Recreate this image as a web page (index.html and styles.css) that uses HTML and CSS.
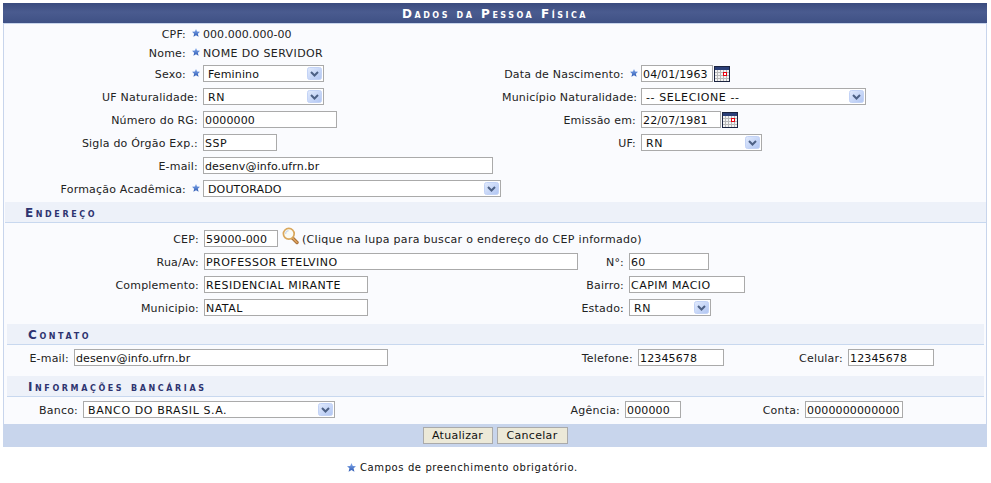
FILE: index.html
```html
<!DOCTYPE html>
<html lang="pt-BR">
<head>
<meta charset="utf-8">
<title>Dados da Pessoa Física</title>
<link rel="stylesheet" href="styles.css">
</head>
<body>
<svg class="defs" width="0" height="0" aria-hidden="true">
  <defs>
    <linearGradient id="starFill" x1="0" y1="0" x2="0" y2="1">
      <stop offset="0" stop-color="#86adee"/>
      <stop offset="1" stop-color="#2c58b2"/>
    </linearGradient>
    <symbol id="star" viewBox="0 0 9 9">
      <path d="M4.5 0 5.8 2.9 9 3.2 6.6 5.3 7.4 8.8 4.5 7 1.6 8.8 2.4 5.3 0 3.2 3.2 2.9Z" fill="url(#starFill)"/>
    </symbol>
    <symbol id="cal" viewBox="0 0 16 16">
      <rect x=".5" y=".5" width="15" height="15" fill="#f4f4f4" stroke="#1b2440"/>
      <rect x="1" y="1" width="14" height="3" fill="#2b3f78"/>
      <path d="M1 6.5h14M1 9.5h14M1 12.5h14M3.5 4v11M6.5 4v11M9.5 4v11M12.5 4v11" stroke="#b9b9b9" fill="none"/>
      <rect x="9.5" y="6.5" width="3" height="3" fill="#fff" stroke="#e8000d"/>
    </symbol>
    <symbol id="lupa" viewBox="0 0 17 18">
      <path d="M10.5 11 15 15.5" stroke="#a8703a" stroke-width="3.4" stroke-linecap="round"/>
      <path d="M10.5 11 15 15.5" stroke="#e0a560" stroke-width="1.4" stroke-linecap="round"/>
      <circle cx="6.8" cy="6.8" r="5.4" fill="#fbfbf4" stroke="#d9a75c" stroke-width="1.7"/>
      <path d="M3.6 7a3.4 3.4 0 0 1 3-3.4" stroke="#c9d8ee" stroke-width="1.2" fill="none"/>
    </symbol>
  </defs>
</svg>
<main class="panel">
  <h1 class="title">Dados da Pessoa Física</h1>
  <div class="panel-body">
    <section class="grid grid-person">
      <span class="lbl req">CPF:<svg class="star"><use href="#star"/></svg></span>
      <span class="value wide3">000.000.000-00</span>
      <span class="lbl req">Nome:<svg class="star"><use href="#star"/></svg></span>
      <span class="value caps wide3">NOME DO SERVIDOR</span>

      <span class="lbl req">Sexo:<svg class="star"><use href="#star"/></svg></span>
      <span class="ctl"><select class="w121"><option>Feminino</option></select></span>
      <span class="lbl req">Data de Nascimento:<svg class="star"><use href="#star"/></svg></span>
      <span class="ctl"><input class="w72" value="04/01/1963"><svg class="cal"><use href="#cal"/></svg></span>

      <span class="lbl">UF Naturalidade:</span>
      <span class="ctl"><select class="w121 caps"><option>RN</option></select></span>
      <span class="lbl">Município Naturalidade:</span>
      <span class="ctl"><select class="w225 caps"><option>-- SELECIONE --</option></select></span>

      <span class="lbl">Número do RG:</span>
      <span class="ctl"><input class="w134" value="0000000"></span>
      <span class="lbl">Emissão em:</span>
      <span class="ctl"><input class="w80" value="22/07/1981"><svg class="cal"><use href="#cal"/></svg></span>

      <span class="lbl">Sigla do Órgão Exp.:</span>
      <span class="ctl"><input class="w74 caps" value="SSP"></span>
      <span class="lbl">UF:</span>
      <span class="ctl"><select class="w121 caps"><option>RN</option></select></span>

      <span class="lbl">E-mail:</span>
      <span class="ctl wide3"><input class="w290" value="desenv@info.ufrn.br"></span>

      <span class="lbl req">Formação Acadêmica:<svg class="star"><use href="#star"/></svg></span>
      <span class="ctl wide3"><select class="w298"><option>DOUTORADO</option></select></span>
    </section>

    <h2 class="sec sec-first">Endereço</h2>
    <section class="grid grid-addr">
      <span class="lbl">CEP:</span>
      <span class="ctl wide3"><input class="w74" value="59000-000"><svg class="lupa"><use href="#lupa"/></svg><span class="hint">(Clique na lupa para buscar o endereço do CEP informado)</span></span>
      <span class="lbl">Rua/Av:</span>
      <span class="ctl"><input class="w374 caps" value="PROFESSOR ETELVINO"></span>
      <span class="lbl">N°:</span>
      <span class="ctl"><input class="w80" value="60"></span>
      <span class="lbl">Complemento:</span>
      <span class="ctl"><input class="w164 caps" value="RESIDENCIAL MIRANTE"></span>
      <span class="lbl">Bairro:</span>
      <span class="ctl"><input class="w116 caps" value="CAPIM MACIO"></span>
      <span class="lbl">Municipio:</span>
      <span class="ctl"><input class="w164 caps" value="NATAL"></span>
      <span class="lbl">Estado:</span>
      <span class="ctl"><select class="w82 caps"><option>RN</option></select></span>
    </section>

    <h2 class="sec sec-contact">Contato</h2>
    <section class="grid grid-contact">
      <span class="lbl">E-mail:</span>
      <span class="ctl"><input class="w314" value="desenv@info.ufrn.br"></span>
      <span class="lbl">Telefone:</span>
      <span class="ctl"><input class="w86" value="12345678"></span>
      <span class="lbl">Celular:</span>
      <span class="ctl"><input class="w86" value="12345678"></span>
    </section>

    <h2 class="sec sec-bank">Informações bancárias</h2>
    <section class="grid grid-bank">
      <span class="lbl">Banco:</span>
      <span class="ctl"><select class="w252 caps"><option>BANCO DO BRASIL S.A.</option></select></span>
      <span class="lbl">Agência:</span>
      <span class="ctl"><input class="w56" value="000000"></span>
      <span class="lbl">Conta:</span>
      <span class="ctl"><input class="w98" value="0000000000000"></span>
    </section>

    <footer class="actions">
      <button type="button" class="btn btn-save">Atualizar</button>
      <button type="button" class="btn btn-cancel">Cancelar</button>
    </footer>
  </div>
</main>
<p class="legend"><svg class="star star-legend"><use href="#star"/></svg>Campos de preenchimento obrigatório.</p>
</body>
</html>
```
FILE: styles.css
```css
* { box-sizing: border-box; }
html, body { margin: 0; padding: 0; background: #fff; }
body {
  width: 991px;
  height: 483px;
  overflow: hidden;
  padding: 3px 0 0 3px;
  font: 11px/13px "DejaVu Sans", Verdana, sans-serif;
  color: #222;
}
.defs { display: block; width: 0; height: 0; overflow: hidden; }
.panel { width: 984px; }
.title {
  margin: 0;
  height: 21px;
  border-bottom: 1px solid #c8d5ec;
  background: linear-gradient(#3a4b7e, #4a5b8f 45%, #3f5185);
  color: #fff;
  font-size: 12px;
  line-height: 22px;
  font-weight: bold;
  font-variant: small-caps;
  letter-spacing: 2.5px;
  text-align: center;
}
.panel-body {
  border: 1px solid #c8d5ec;
  border-width: 0 1px;
  background: #fafbfe;
  height: 423px;
}
.grid { display: grid; grid-auto-rows: 23px; align-items: center; }
.grid-person {
  grid-template-columns: 199px 299px 139px 1fr;
  grid-template-rows: 20px 18px repeat(6, 23px);
}
.grid-addr { grid-template-columns: 200px 376px 49px 1fr; margin-top: 4px; }
.grid-contact { grid-template-columns: 70px 316px 248px 90px 120px 1fr; margin-top: 1px; }
.grid-bank { grid-template-columns: 79px 254px 288px 60px 120px 1fr; margin-top: 1px; }
.lbl { text-align: right; padding-right: 5px; white-space: nowrap; letter-spacing: .2px; padding-top: 1px; }
.lbl.req { padding-right: 4px; }
.value { padding-top: 1px; letter-spacing: .05px; }
.value.caps { letter-spacing: .38px; }
.wide3 { grid-column: 2 / -1; }
.ctl { display: flex; align-items: center; min-width: 0; white-space: nowrap; }
.star { width: 8px; height: 8px; margin: 0 -1px 0 6px; vertical-align: 1px; }
.cal { width: 16px; height: 16px; margin-left: 1px; flex: none; }
.lupa { width: 17px; height: 18px; margin: -5px 0 0 4px; flex: none; }
.hint { margin-left: 3px; letter-spacing: .3px; padding-top: 1px; }
input, select {
  display: block;
  height: 17px;
  margin: 0;
  border: 1px solid #aaa;
  border-radius: 0;
  background-color: #fff;
  color: #111;
  font: 11px "DejaVu Sans", Verdana, sans-serif;
  letter-spacing: .13px;
  outline: 0;
}
input.caps { letter-spacing: .47px; }
select.caps { letter-spacing: .6px; }
input { padding: 1px 1px 0; }
select {
  appearance: none;
  -webkit-appearance: none;
  padding: 1px 18px 0 4px;
  background-repeat: no-repeat;
  background-position: right 1px center;
  background-size: 15px 13px;
  background-image: url("data:image/svg+xml,%3Csvg xmlns='http://www.w3.org/2000/svg' width='15' height='13'%3E%3Cdefs%3E%3ClinearGradient id='g' x1='0' y1='0' x2='1' y2='1'%3E%3Cstop offset='0' stop-color='%23e2ebfd'/%3E%3Cstop offset='1' stop-color='%23b0c5f2'/%3E%3C/linearGradient%3E%3C/defs%3E%3Crect x='.5' y='.5' width='14' height='12' rx='2' fill='url(%23g)' stroke='%23c3d3f6'/%3E%3Cpath d='M4 5l3.5 3.5L11 5' fill='none' stroke='%234d6185' stroke-width='2'/%3E%3C/svg%3E");
}
.w56 { width: 56px; }
.w72 { width: 72px; }
.w74 { width: 74px; }
.w80 { width: 80px; }
.w82 { width: 82px; }
.w86 { width: 86px; }
.w98 { width: 98px; }
.w116 { width: 116px; }
.w121 { width: 121px; }
.w134 { width: 134px; }
.w164 { width: 164px; }
.w225 { width: 225px; }
.w252 { width: 252px; }
.w290 { width: 290px; }
.w298 { width: 298px; }
.w314 { width: 314px; }
.w374 { width: 374px; }
.sec {
  height: 21px;
  padding-left: 20px;
  border-bottom: 1px solid #c8d8ef;
  background: #edf1f9;
  color: #2e3470;
  font-size: 12px;
  line-height: 22px;
  font-weight: bold;
  font-variant: small-caps;
  letter-spacing: 2.6px;
}
.sec-first { margin: 2px 0 0 1px; }
.sec-contact { margin: 5px 2px 0 3px; padding-left: 21px; }
.sec-bank { margin: 7px 2px 0 3px; padding-left: 21px; }
.actions {
  margin-top: 3px;
  height: 23px;
  display: flex;
  justify-content: center;
  align-items: center;
  gap: 4px;
  background: #c8d5ec;
}
.btn {
  height: 17px;
  padding: 0;
  border: 1px solid #aaa;
  background: #ece9d8;
  color: #111;
  font: 11px "DejaVu Sans", Verdana, sans-serif;
  letter-spacing: .3px;
}
.btn-save { width: 70px; }
.btn-cancel { width: 71px; }
.legend {
  margin: 14px 0 0;
  padding-left: 344px;
  font-size: 10px;
  line-height: 13px;
  letter-spacing: .6px;
  color: #111;
  display: flex;
  align-items: center;
}
.star-legend { width: 9px; height: 9px; margin: 0 4px 0 0; }
```
